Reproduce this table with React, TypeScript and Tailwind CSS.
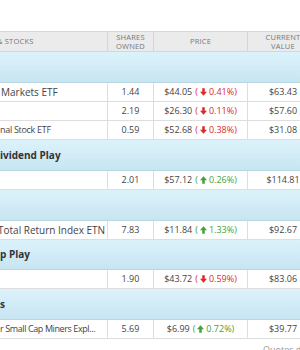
import React from "react";

type Chg = { dir: "up" | "down"; pct: string };
type Row = { kind: "row"; name: string; shares: string; price: string; chg: Chg; value: string; nameCls?: string };
type Band = { kind: "band"; title: string; h: string };

const items: (Row | Band)[] = [
  { kind: "band", title: "", h: "h-[31px]" },
  { kind: "row", name: "Markets ETF", shares: "1.44", price: "$44.05", chg: { dir: "down", pct: "0.41%" }, value: "$63.43", nameCls: "ml-[1px]" },
  { kind: "row", name: "", shares: "2.19", price: "$26.30", chg: { dir: "down", pct: "0.11%" }, value: "$57.60" },
  { kind: "row", name: "nal Stock ETF", shares: "0.59", price: "$52.68", chg: { dir: "down", pct: "0.38%" }, value: "$31.08", nameCls: "text-[9px] tracking-[-0.3px]" },
  { kind: "band", title: "ividend Play", h: "h-[31px]" },
  { kind: "row", name: "", shares: "2.01", price: "$57.12", chg: { dir: "up", pct: "0.26%" }, value: "$114.81" },
  { kind: "band", title: "", h: "h-[31px]" },
  { kind: "row", name: "Total Return Index ETN", shares: "7.83", price: "$11.84", chg: { dir: "up", pct: "1.33%" }, value: "$92.67", nameCls: "-ml-[2px]" },
  { kind: "band", title: "p Play", h: "h-[30px]" },
  { kind: "row", name: "", shares: "1.90", price: "$43.72", chg: { dir: "down", pct: "0.59%" }, value: "$83.06" },
  { kind: "band", title: "s", h: "h-[31px]" },
  { kind: "row", name: "r Small Cap Miners Expl...", shares: "5.69", price: "$6.99", chg: { dir: "up", pct: "0.72%" }, value: "$39.77", nameCls: "text-[9px] tracking-[-0.4px]" },
];

function Arrow({ dir }: { dir: "up" | "down" }) {
  return (
    <svg width="7" height="8" viewBox="0 0 10 11" className="inline-block" style={{ transform: dir === "up" ? "rotate(180deg)" : undefined }}>
      <path d="M3.2 0h3.6v5.2H10L5 11 0 5.2h3.2z" fill="currentColor" />
    </svg>
  );
}

export default function App() {
  return (
    <div className="w-[300px] h-[350px] overflow-hidden bg-white pt-[31px]" style={{ fontFamily: '"Open Sans", "Liberation Sans", sans-serif' }}>
      <div className="w-[340px]">
        <div className="flex h-[21px] bg-[#ebebeb] border-t border-b border-[#d6d6d6] text-[7.5px] text-[#777] uppercase tracking-[0.2px]">
          <div className="w-[108px] shrink-0 border-r border-[#d6d6d6] flex items-center whitespace-nowrap">
            <span className="-ml-[3px]">&amp; Stocks</span>
          </div>
          <div className="w-[46px] shrink-0 border-r border-[#d6d6d6] flex flex-col items-center justify-center leading-[9px]">
            <span>Shares</span>
            <span>Owned</span>
          </div>
          <div className="w-[94px] shrink-0 border-r border-[#d6d6d6] flex items-center justify-center">Price</div>
          <div className="w-[70px] shrink-0 flex flex-col items-center justify-center leading-[9px]">
            <span>Current</span>
            <span>Value</span>
          </div>
        </div>
        {items.map((it, i) =>
          it.kind === "band" ? (
            <div
              key={i}
              className={`${it.h} flex items-center bg-gradient-to-b from-[#dcf2fb] to-[#c7e5f2] border-b border-[#b9d6e3] text-[10px] font-bold text-[#333] whitespace-nowrap`}
            >
              {it.title}
            </div>
          ) : (
            <div key={i} className="flex h-[19px] border-b border-[#dedede] text-[9px] text-[#444] whitespace-nowrap">
              <div className="w-[108px] shrink-0 border-r border-[#dedede] flex items-center overflow-hidden text-[10px]">
                <span className={it.nameCls ?? ""}>{it.name}</span>
              </div>
              <div className="w-[46px] shrink-0 border-r border-[#dedede] flex items-center justify-center">{it.shares}</div>
              <div className="w-[94px] shrink-0 border-r border-[#dedede] flex items-center justify-center">
                <span>{it.price}</span>
                <span className={`ml-[3px] flex items-center ${it.chg.dir === "up" ? "text-[#45a03a]" : "text-[#dc2a2a]"}`}>
                  (<span className="mx-[2px] flex items-center"><Arrow dir={it.chg.dir} /></span>
                  {it.chg.pct})
                </span>
              </div>
              <div className="w-[70px] shrink-0 flex items-center justify-center">{it.value}</div>
            </div>
          )
        )}
        <div className="pl-[263px] pt-[5px] text-[9px] text-[#999] whitespace-nowrap leading-[11px]">Quotes delayed</div>
      </div>
    </div>
  );
}
